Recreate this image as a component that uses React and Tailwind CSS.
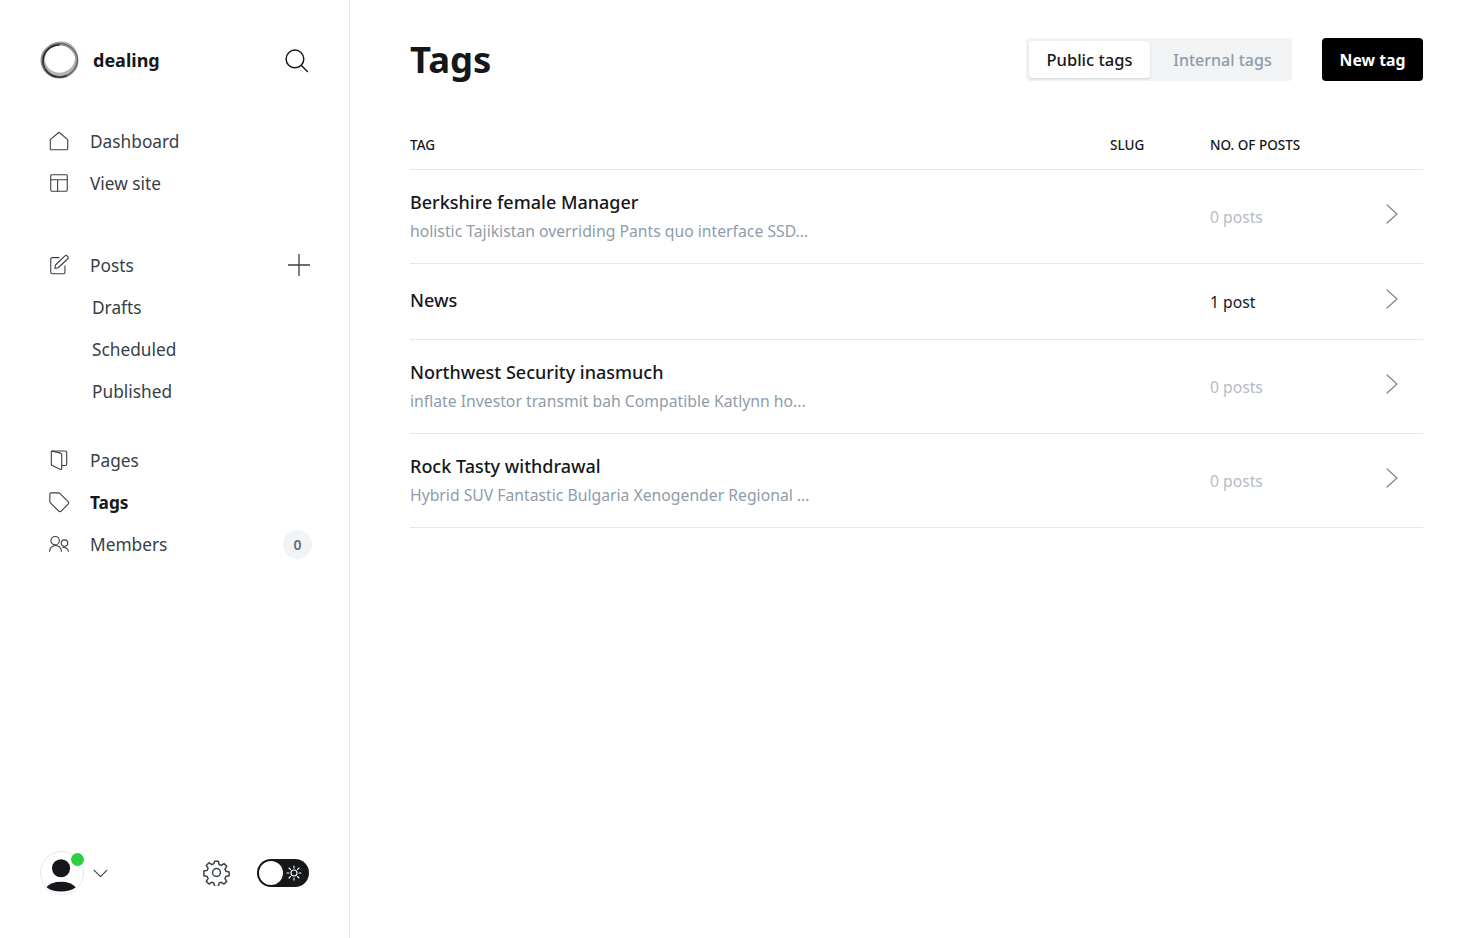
const font = { fontFamily: '"Noto Sans", "Open Sans", sans-serif' }

const icons = {
  home: <path d="M2.500 10.500 12 2.500l9.500 8v10a1 1 0 0 1-1 1h-17a1 1 0 0 1-1-1z" />,
  site: (
    <>
      <rect x="3" y="3" width="18" height="18" rx="1" />
      <path d="M3 8.500h18M10.500 8.500V21" />
    </>
  ),
  posts: (
    <>
      <path d="M12 4H4.500A1.500 1.500 0 0 0 3 5.500V20a1.500 1.500 0 0 0 1.500 1.500H17a1.500 1.500 0 0 0 1.500-1.500v-7" />
      <path d="m11 15-3.500.7.700-3.700L18.500 2a1.600 1.600 0 0 1 2.300 0l.9.9a1.600 1.600 0 0 1 0 2.300z" />
    </>
  ),
  pages: (
    <>
      <path d="M3.600 3.200a1 1 0 0 1 1-1H19a1.400 1.400 0 0 1 1.400 1.400v13a1.400 1.400 0 0 1-1.400 1.400h-4" />
      <path d="M3.600 3.200a1 1 0 0 1 1.200-.9l8.800 2.200A1.800 1.800 0 0 1 15 6.200v15.200a1 1 0 0 1-1.300.9l-9-4.200a1.800 1.800 0 0 1-1.100-1.600z" />
    </>
  ),
  tags: <path d="M2 3.500A1.500 1.500 0 0 1 3.500 2h8a2 2 0 0 1 1.400.6l9 9a2 2 0 0 1 0 2.800l-7.500 7.500a2 2 0 0 1-2.800 0l-9-9A2 2 0 0 1 2 11.500z" />,
  members: (
    <>
      <circle cx="7.800" cy="8.400" r="4.600" />
      <path d="M1.800 20a6.400 6.400 0 0 1 12.800 0" />
      <circle cx="18" cy="11" r="3.500" />
      <path d="M16.300 15.700a5.500 5.500 0 0 1 6 4.300" />
    </>
  ),
}

function NavIcon({ name }) {
  return (
    <svg viewBox="0 0 24 24" fill="none" stroke="#394047" strokeWidth="1.200" strokeLinejoin="round" strokeLinecap="round" className="w-[22px] h-[22px] shrink-0">
      {icons[name]}
    </svg>
  )
}

function NavItem({ icon, label, active, children }) {
  return (
    <div className="flex items-center h-[42px] pl-[48px] pr-[38px]">
      <NavIcon name={icon} />
      <span className={`ml-[20px] pt-[2px] text-[17.300px] flex-1 ${active ? 'font-bold text-[#15171a]' : 'text-[#394047]'}`}>{label}</span>
      {children}
    </div>
  )
}

function SubItem({ label }) {
  return <div className="flex items-center h-[42px] pl-[92px] pt-[2px] text-[17.300px] text-[#394047]">{label}</div>
}

function Chevron() {
  return (
    <svg viewBox="0 0 12 20" fill="none" stroke="#7c8b9a" strokeWidth="1.300" strokeLinecap="round" strokeLinejoin="round" className="w-[12px] h-[20px]">
      <path d="M1 1l10 9-10 9" />
    </svg>
  )
}

const rows = [
  { name: 'Berkshire female Manager', desc: 'holistic Tajikistan overriding Pants quo interface SSD...', posts: '0 posts' },
  { name: 'News', posts: '1 post', live: true },
  { name: 'Northwest Security inasmuch', desc: 'inflate Investor transmit bah Compatible Katlynn ho...', posts: '0 posts' },
  { name: 'Rock Tasty withdrawal', desc: 'Hybrid SUV Fantastic Bulgaria Xenogender Regional ...', posts: '0 posts' },
]

function TagRow({ row }) {
  return (
    <div className={`flex border-b border-[#e6e9eb] ${row.desc ? 'h-[94px]' : 'h-[76px]'}`}>
      <div className={`flex-1 flex flex-col justify-center ${row.desc ? 'pb-[2px]' : 'pb-[4px]'}`}>
        <p className="text-[18px] leading-[26px] font-medium text-[#15171a]">{row.name}</p>
        {row.desc && <p className="text-[15.740px] leading-[22px] mt-[5px] text-[#8e9cac]">{row.desc}</p>}
      </div>
      <div className={`w-[176px] pt-[3px] flex items-center text-[15.700px] ${row.live ? 'text-[#15171a]' : 'text-[#b5bcc4]'}`}>{row.posts}</div>
      <div className="w-[37px] pb-[6px] flex items-center">
        <Chevron />
      </div>
    </div>
  )
}

export default function App() {
  return (
    <div style={font} className="flex min-h-[938px] bg-white">
      <aside className="w-[350px] h-[938px] shrink-0 border-r border-[#e6e9eb] flex flex-col">
        <div className="flex items-center justify-between px-[40px] pt-[40px] h-[80px]">
          <div className="flex items-center">
            <svg viewBox="0 0 40 40" fill="none" className="w-[40px] h-[40px]">
              <ellipse cx="19.500" cy="20.500" rx="17.500" ry="16.500" stroke="#777777" strokeWidth="3" strokeOpacity="0.800" />
              <ellipse cx="21" cy="18.500" rx="16.500" ry="15.500" stroke="#a0a0a0" strokeWidth="2.400" strokeOpacity="0.800" transform="rotate(-30 20 20)" />
              <ellipse cx="19.500" cy="21" rx="16.500" ry="16" stroke="#222222" strokeWidth="1.600" strokeDasharray="58 46" strokeDashoffset="-18" />
              <ellipse cx="20" cy="20" rx="17.500" ry="16.500" stroke="#4a4a4a" strokeWidth="1" strokeOpacity="0.800" />
            </svg>
            <span className="ml-[13px] text-[18px] font-bold text-[#15171a]">dealing</span>
          </div>
          <svg viewBox="0 0 24 24" fill="none" stroke="#15171a" strokeWidth="1.400" strokeLinecap="round" className="w-[25px] h-[25px]">
            <circle cx="10.500" cy="10.500" r="8.500" />
            <path d="m16.500 16.500 6 6" />
          </svg>
        </div>
        <nav className="mt-[40px]">
          <NavItem icon="home" label="Dashboard" />
          <NavItem icon="site" label="View site" />
        </nav>
        <nav className="mt-[40px]">
          <NavItem icon="posts" label="Posts">
            <svg viewBox="0 0 24 24" fill="none" stroke="#394047" strokeWidth="1.300" className="w-[24px] h-[24px]">
              <path d="M12 1v22M1 12h22" />
            </svg>
          </NavItem>
          <SubItem label="Drafts" />
          <SubItem label="Scheduled" />
          <SubItem label="Published" />
        </nav>
        <nav className="mt-[27px]">
          <NavItem icon="pages" label="Pages" />
          <NavItem icon="tags" label="Tags" active />
          <NavItem icon="members" label="Members">
            <span className="w-[29px] h-[29px] -mr-[1px] rounded-full bg-[#f1f3f4] flex items-center justify-center text-[14px] font-semibold text-[#626d79]">0</span>
          </NavItem>
        </nav>
        <div className="mt-auto mb-[43px] px-[40px] flex items-center">
          <div className="relative">
            <div className="w-[44px] h-[44px] rounded-full border border-[#e6e9eb] overflow-hidden">
              <svg viewBox="0 0 44 44" className="w-full h-full">
                <circle cx="21" cy="17" r="9.500" fill="#15171a" />
                <path d="M5.500 37a17.500 11 0 0 1 31 0c-4 3-9.500 4.500-15.500 4.500S9.500 40 5.500 37z" fill="#15171a" />
              </svg>
            </div>
            <span className="absolute top-[2px] right-[0px] w-[13px] h-[13px] rounded-full bg-[#30cf43]" />
          </div>
          <svg viewBox="0 0 16 10" fill="none" stroke="#394047" strokeWidth="1.300" strokeLinecap="round" strokeLinejoin="round" className="ml-[9px] w-[15px] h-[9px]">
            <path d="m1 1.500 7 7 7-7" />
          </svg>
          <svg viewBox="0 0 24 24" fill="none" stroke="#394047" strokeWidth="1.300" strokeLinejoin="round" className="ml-[95px] mb-[1px] w-[27px] h-[27px]">
            <circle cx="12" cy="12" r="3.500" />
            <path d="M10.300 2h3.400l.6 2.900 1.900.8 2.500-1.600 2.400 2.400-1.600 2.500.8 1.900 2.900.6v3.400l-2.900.6-.8 1.900 1.600 2.500-2.400 2.400-2.500-1.600-1.900.8-.6 2.900h-3.400l-.6-2.900-1.900-.8-2.500 1.600-2.400-2.400 1.600-2.500-.8-1.900-2.900-.6V10.700l2.900-.6.8-1.900-1.600-2.500 2.400-2.400 2.500 1.600 1.900-.8z" />
          </svg>
          <div className="ml-[27px] w-[52px] h-[28px] rounded-full bg-[#15171a] flex items-center pl-[2px]">
            <span className="w-[24px] h-[24px] rounded-full bg-white" />
            <svg viewBox="0 0 16 16" fill="none" stroke="white" strokeWidth="1.100" strokeLinecap="round" className="ml-[3px] w-[16px] h-[16px]">
              <circle cx="8" cy="8" r="3" />
              <path d="M8 1v2M8 13v2M1 8h2M13 8h2M3 3l1.500 1.500M11.500 11.500 13 13M3 13l1.500-1.500M11.500 4.500 13 3" />
            </svg>
          </div>
        </div>
      </aside>

      <main className="flex-1 px-[60px]">
        <header className="flex items-center justify-between pt-[38px]">
          <h1 className="text-[36.500px] leading-[43px] font-bold text-[#15171a]">Tags</h1>
          <div className="flex items-center">
            <div className="flex h-[43px] p-[3px] rounded-[4px] bg-[#f1f3f4]">
              <span className="w-[121px] pt-[1px] rounded-[4px] bg-white shadow-sm flex items-center justify-center text-[16.500px] font-medium text-[#15171a]">Public tags</span>
              <span className="w-[139px] pt-[1px] pl-[6px] flex items-center justify-center text-[16px] font-medium text-[#8e9cac]">Internal tags</span>
            </div>
            <span className="ml-[30px] w-[101px] h-[43px] pt-[2px] rounded-[4px] bg-black text-white flex items-center justify-center text-[15.800px] font-bold">New tag</span>
          </div>
        </header>
        <div className="mt-[39px] pt-[2px] flex h-[50px] items-center border-b border-[#e6e9eb] text-[13.500px] font-medium text-[#15171a]">
          <span className="flex-1">TAG</span>
          <span className="w-[100px]">SLUG</span>
          <span className="w-[213px]">NO. OF POSTS</span>
        </div>
        {rows.map((row) => (
          <TagRow key={row.name} row={row} />
        ))}
      </main>
    </div>
  )
}
